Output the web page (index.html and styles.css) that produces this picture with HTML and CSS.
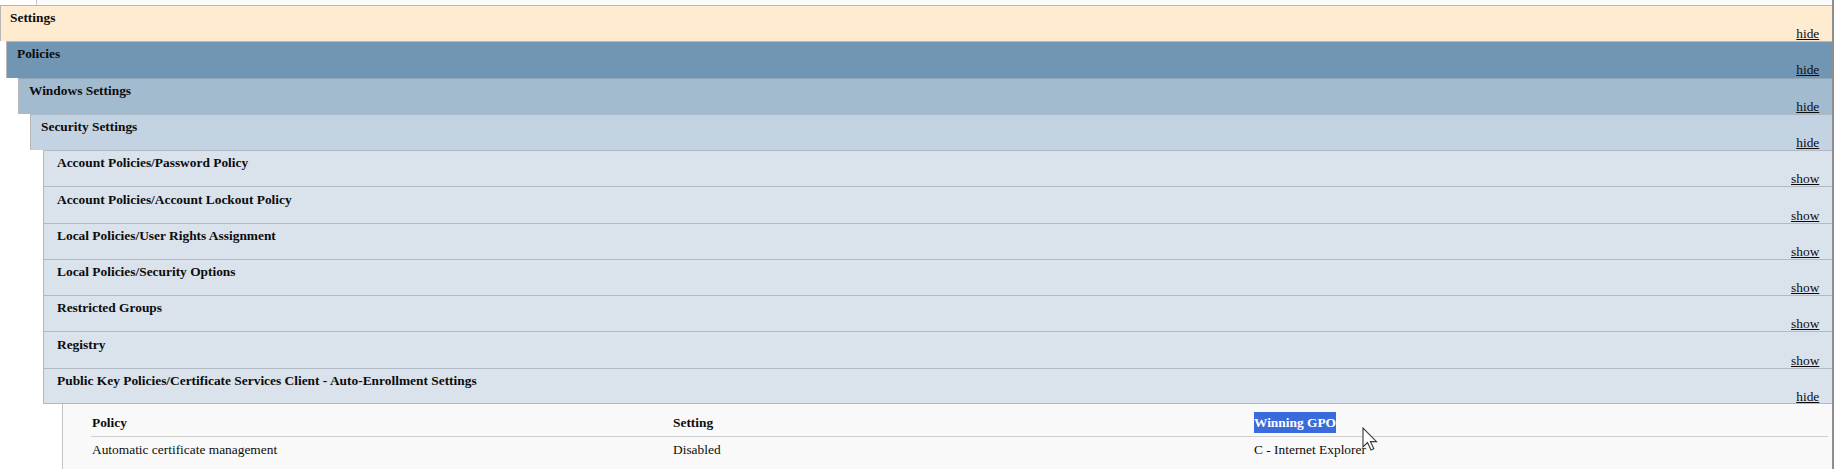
FILE: index.html
```html
<!DOCTYPE html>
<html>
<head>
<meta charset="utf-8">
<title>Settings report</title>
<link rel="stylesheet" href="styles.css">
</head>
<body>
<div class="page">
  <div class="strip"></div>
  <section class="level level-0">
    <div class="bar bar-settings"><span class="title">Settings</span><a class="toggle" href="#">hide</a></div>
    <section class="level level-1">
      <div class="bar bar-policies"><span class="title">Policies</span><a class="toggle" href="#">hide</a></div>
      <section class="level level-2">
        <div class="bar bar-windows"><span class="title">Windows Settings</span><a class="toggle" href="#">hide</a></div>
        <section class="level level-3">
          <div class="bar bar-security"><span class="title">Security Settings</span><a class="toggle" href="#">hide</a></div>
          <section class="level level-4">
            <div class="bar bar-sub"><span class="title">Account Policies/Password Policy</span><a class="toggle" href="#">show</a></div>
            <div class="bar bar-sub"><span class="title">Account Policies/Account Lockout Policy</span><a class="toggle" href="#">show</a></div>
            <div class="bar bar-sub"><span class="title">Local Policies/User Rights Assignment</span><a class="toggle" href="#">show</a></div>
            <div class="bar bar-sub"><span class="title">Local Policies/Security Options</span><a class="toggle" href="#">show</a></div>
            <div class="bar bar-sub"><span class="title">Restricted Groups</span><a class="toggle" href="#">show</a></div>
            <div class="bar bar-sub"><span class="title">Registry</span><a class="toggle" href="#">show</a></div>
            <div class="bar bar-sub bar-last"><span class="title">Public Key Policies/Certificate Services Client - Auto-Enrollment Settings</span><a class="toggle" href="#">hide</a></div>
            <div class="content">
              <table class="info">
                <colgroup>
                  <col class="col-policy">
                  <col class="col-setting">
                  <col class="col-gpo">
                </colgroup>
                <thead>
                  <tr><th>Policy</th><th>Setting</th><th><span class="selected">Winning GPO</span></th></tr>
                </thead>
                <tbody>
                  <tr><td>Automatic certificate management</td><td>Disabled</td><td>C - Internet Explorer</td></tr>
                </tbody>
              </table>
            </div>
          </section>
        </section>
      </section>
    </section>
  </section>
  <svg class="cursor" width="17" height="25" viewBox="0 0 17 25" aria-hidden="true">
    <path d="M1 1 L1 20 L5.5 15.5 L9 23 L11.8 21.8 L8.4 14.6 L14.5 14.6 Z" fill="#ffffff" stroke="#3a3a3a" stroke-width="1.1" stroke-linejoin="miter"/>
  </svg>
</div>
</body>
</html>
```

FILE: styles.css
```css
html, body {
  margin: 0;
  padding: 0;
  background: #ffffff;
}

.page {
  position: relative;
  width: 1832px;
  height: 469px;
  border-right: 2px solid #8e8e8e;
  background: #ffffff;
  font-family: "Liberation Serif", "Times New Roman", serif;
  font-size: 13.4px;
  color: #0c0c0c;
  overflow: hidden;
}

.strip {
  height: 5px;
  margin-left: 36px;
  border-left: 1px solid #c8c8c8;
  background: #fbfbfb;
}

.level-1 { margin-left: 6px; }
.level-2 { margin-left: 12px; }
.level-3 { margin-left: 12px; }
.level-4 { margin-left: 13px; }

.bar {
  box-sizing: border-box;
  height: 36.27px;
  display: flex;
  flex-direction: column;
  justify-content: space-between;
  padding: 4.2px 12.7px 1px 10px;
  border-top: 1px solid #b7b7b7;
  border-left: 1px solid #b7b7b7;
}

.title {
  font-weight: bold;
  white-space: nowrap;
}

.toggle {
  align-self: flex-end;
  color: #0c0c0c;
  text-decoration: underline;
}

.bar-settings {
  background: #feebd0;
  padding-left: 9px;
}

.bar-policies {
  background: #7196b3;
  border-top-color: #a9b9c6;
}

.bar-windows {
  background: #a2bbcf;
  border-top-color: #8fa6b8;
}

.bar-security {
  background: #c4d3e1;
  border-top-color: #a9b9c8;
}

.bar-sub {
  background: #dae2eb;
  border-top-color: #b1bac4;
  padding-left: 13px;
}

.bar-last {
  border-bottom: 1px solid #b1bac4;
}

.content {
  margin-left: 19px;
  border-left: 1px solid #c4c4c4;
  background: #f9f9f9;
  height: 80px;
  padding-top: 11.3px;
}

.info {
  margin-left: 28px;
  width: 1737px;
  table-layout: fixed;
  border-collapse: collapse;
  font-size: 13.4px;
}

.col-policy { width: 581px; }
.col-setting { width: 581px; }

.info th {
  text-align: left;
  font-weight: bold;
  padding: 0 1px 4.5px;
  border-bottom: 1px solid #cfcfcf;
}

.info td {
  text-align: left;
  padding: 5.6px 1px 0;
  font-weight: normal;
}

.selected {
  background: #3a6bdb;
  color: #ffffff;
  padding: 3px 0;
}

.cursor {
  position: absolute;
  left: 1362px;
  top: 427px;
}
```
